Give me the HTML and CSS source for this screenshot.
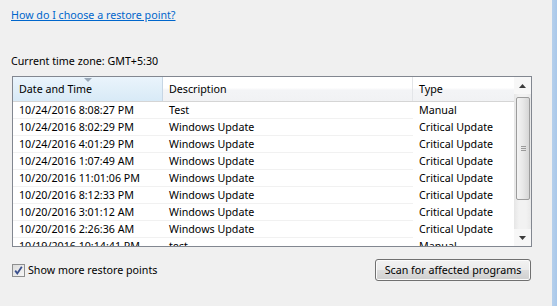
FILE: index.html
```html
<!DOCTYPE html>
<html>
<head>
<meta charset="utf-8">
<link rel="stylesheet" href="styles.css">
</head>
<body>
<div class="page">
  <div class="main">
    <a class="link" href="#">How do I choose a restore point?</a>
    <div class="tz">Current time zone: GMT+5:30</div>
    <div class="list">
      <div class="table">
        <div class="head">
          <div class="hc sorted">Date and Time<span class="sortarrow"></span></div>
          <div class="hc">Description</div>
          <div class="hc last">Type</div>
        </div>
        <div class="rows">
          <div class="row"><div class="c c1">10/24/2016 8:08:27 PM</div><div class="c c2">Test</div><div class="c c3">Manual</div></div>
          <div class="row"><div class="c c1">10/24/2016 8:02:29 PM</div><div class="c c2">Windows Update</div><div class="c c3">Critical Update</div></div>
          <div class="row"><div class="c c1">10/24/2016 4:01:29 PM</div><div class="c c2">Windows Update</div><div class="c c3">Critical Update</div></div>
          <div class="row"><div class="c c1">10/24/2016 1:07:49 AM</div><div class="c c2">Windows Update</div><div class="c c3">Critical Update</div></div>
          <div class="row"><div class="c c1">10/20/2016 11:01:06 PM</div><div class="c c2">Windows Update</div><div class="c c3">Critical Update</div></div>
          <div class="row"><div class="c c1">10/20/2016 8:12:33 PM</div><div class="c c2">Windows Update</div><div class="c c3">Critical Update</div></div>
          <div class="row"><div class="c c1">10/20/2016 3:01:12 AM</div><div class="c c2">Windows Update</div><div class="c c3">Critical Update</div></div>
          <div class="row"><div class="c c1">10/20/2016 2:26:36 AM</div><div class="c c2">Windows Update</div><div class="c c3">Critical Update</div></div>
          <div class="row"><div class="c c1">10/19/2016 10:14:41 PM</div><div class="c c2">test</div><div class="c c3">Manual</div></div>
        </div>
      </div>
      <div class="scrollbar">
        <div class="sbtn"><svg width="7" height="4" viewBox="0 0 7 4"><path d="M3.5 0 L7 4 L0 4 Z" fill="#3c3c3c"/></svg></div>
        <div class="track">
          <div class="thumb"><span class="grip"></span></div>
        </div>
        <div class="sbtn"><svg width="7" height="4" viewBox="0 0 7 4"><path d="M0 0 L7 0 L3.5 4 Z" fill="#3c3c3c"/></svg></div>
      </div>
    </div>
    <div class="bottom">
      <label class="check">
        <span class="box"><svg width="11" height="11" viewBox="0 0 11 11"><path d="M2.2 5.6 L4.3 8.4 L8.8 1.8" fill="none" stroke="#3a4f8c" stroke-width="1.8"/></svg></span>
        <span>Show more restore points</span>
      </label>
      <button class="btn">Scan for affected programs</button>
    </div>
  </div>
  <div class="edge"></div>
</div>
</body>
</html>
```

FILE: styles.css
```css
html, body {
  margin: 0;
  padding: 0;
}
body {
  background: #f0f0f0;
  font-family: "Noto Sans", "Liberation Sans", sans-serif;
  font-size: 10.7px;
  color: #000;
}
.page {
  display: flex;
  height: 306px;
  overflow: hidden;
}
.main {
  flex: 1;
  padding: 7px 0 0 11px;
  display: flex;
  flex-direction: column;
  align-items: flex-start;
}
.edge {
  width: 5px;
  background: linear-gradient(to right, #b6d0ec, #a9c8ea);
}
.link {
  color: #0066cc;
  text-decoration: underline;
  line-height: 16px;
}
.tz {
  margin-top: 30px;
  line-height: 16px;
}
.list {
  margin-top: 7px;
  margin-left: 1px;
  width: 518px;
  height: 169px;
  border: 1px solid #828790;
  background: #fff;
  display: flex;
}
.table {
  width: 501px;
  overflow: hidden;
}
.head {
  display: grid;
  grid-template-columns: 150px 250px 101px;
  height: 24px;
  border-bottom: 1px solid #d5d5d5;
  background: linear-gradient(#ffffff 0%, #ffffff 45%, #f3f4f6 55%, #f1f2f4 100%);
}
.hc {
  position: relative;
  padding-left: 6px;
  line-height: 24px;
  border-right: 1px solid #e3e5e8;
  white-space: nowrap;
}
.hc.last {
  border-right: none;
}
.hc.sorted {
  background: linear-gradient(#eaf4fc 0%, #e1eff9 50%, #d8eaf7 100%);
  border-right: 1px solid #c7d6e4;
}
.sortarrow {
  position: absolute;
  left: 71px;
  top: 1px;
  width: 0;
  height: 0;
  border-left: 4px solid transparent;
  border-right: 4px solid transparent;
  border-top: 4px solid #9aa9b9;
}
.row {
  display: grid;
  grid-template-columns: 150px 250px 101px;
  height: 17px;
}
.c {
  line-height: 17px;
  padding-left: 6px;
  white-space: nowrap;
  overflow: hidden;
}
.c1, .c2 {
  box-shadow: inset 0 -1px 0 #f1f1f1;
}
.scrollbar {
  width: 17px;
  display: flex;
  flex-direction: column;
  background: linear-gradient(to right, #e6e6e6, #f2f2f2 30%, #f2f2f2 70%, #e9e9e9);
}
.sbtn {
  height: 17px;
  display: flex;
  align-items: center;
  justify-content: center;
  background: #f7f7f7;
}
.track {
  flex: 1;
  padding: 3px 1px 0 2px;
}
.thumb {
  height: 101px;
  border: 1px solid #9c9c9c;
  border-radius: 2px;
  background: linear-gradient(to right, #f4f4f4, #e8e8e8 50%, #d6d6d6);
  display: flex;
  align-items: center;
  justify-content: center;
}
.grip {
  width: 5px;
  height: 5px;
  background: linear-gradient(#9a9a9a 0 1px, transparent 1px 2px, #9a9a9a 2px 3px, transparent 3px 4px, #9a9a9a 4px 5px);
}
.bottom {
  margin-top: 12px;
  width: 520px;
  display: flex;
  justify-content: space-between;
  align-items: center;
}
.check {
  display: flex;
  align-items: center;
  gap: 3px;
  margin-left: 1px;
}
.box {
  width: 11px;
  height: 11px;
  border: 1px solid #8e8f8f;
  background: linear-gradient(135deg, #dcdcdc, #f6f6f6);
  display: flex;
}
.btn {
  width: 156px;
  height: 22px;
  font-family: inherit;
  font-size: 10.7px;
  color: #000;
  border: 1px solid #707070;
  border-radius: 3px;
  background: linear-gradient(#f2f2f2 0%, #ebebeb 50%, #dddddd 51%, #cfcfcf 100%);
  box-shadow: inset 0 0 0 1px #fbfbfb;
  padding: 0;
}
```
